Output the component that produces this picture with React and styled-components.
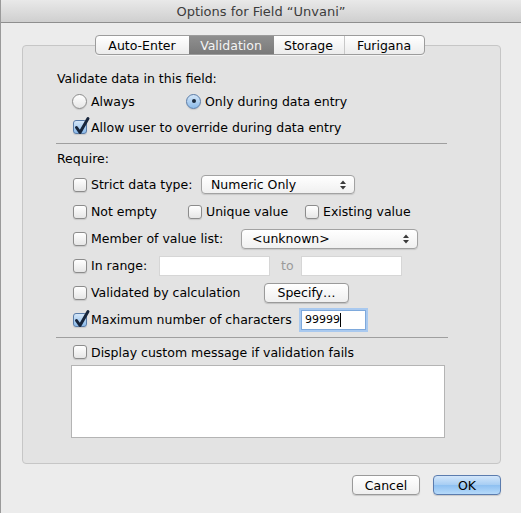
import React from "react";
import styled, { createGlobalStyle } from "styled-components";

const GlobalStyle = createGlobalStyle`
  html, body {
    margin: 0;
    padding: 0;
    background: #ececec;
  }
  body {
    font-family: "DejaVu Sans", "Liberation Sans", sans-serif;
    font-size: 12.5px;
    color: #000;
  }
`;

const Window = styled.div`
  width: 521px;
  height: 513px;
  box-sizing: border-box;
  background: #ececec;
  border-left: 1px solid #9a9a9a;
  display: flex;
  flex-direction: column;
  overflow: hidden;
`;

const TitleBar = styled.div`
  height: 21px;
  flex-shrink: 0;
  display: flex;
  align-items: center;
  justify-content: center;
  background: linear-gradient(#e9e9e9, #cfcfcf);
  border-bottom: 1px solid #8e8e8e;
  font-size: 13px;
  color: #3c3c3c;
  padding-top: 1px;
`;

const Body = styled.div`
  padding: 22px 20px 0 21px;
  display: flex;
  flex-direction: column;
`;

const GroupBox = styled.div`
  height: 419px;
  box-sizing: border-box;
  background: #e3e3e3;
  border: 1px solid #c6c6c6;
  border-radius: 4px;
  display: flex;
  flex-direction: column;
`;

const TabBar = styled.div`
  margin-top: -11px;
  align-self: center;
  display: flex;
  height: 20px;
  box-sizing: border-box;
  border: 1px solid #9c9c9c;
  border-radius: 4px;
  background: linear-gradient(#ffffff, #ececec);
  overflow: hidden;
  box-shadow: 0 1px 0 rgba(255, 255, 255, 0.6);
  margin-left: -4px;
`;

const Tab = styled.div`
  width: ${(p) => p.$w}px;
  display: flex;
  align-items: center;
  justify-content: center;
  font-size: 12.5px;
  color: ${(p) => (p.$active ? "#f4f4f4" : "#000")};
  background: ${(p) =>
    p.$active ? "linear-gradient(#8f8f8f, #7a7a7a)" : "transparent"};
  border-left: ${(p) => (p.$divider ? "1px solid #c8c8c8" : "none")};
`;

const Section = styled.div`
  display: flex;
  flex-direction: column;
  padding-left: ${(p) => p.$pl || 0}px;
`;

const Row = styled.div`
  height: ${(p) => p.$h || 20}px;
  margin-top: ${(p) => p.$mt || 0}px;
  padding-left: ${(p) => p.$pl || 0}px;
  display: flex;
  align-items: center;
`;

const Label = styled.span`
  white-space: nowrap;
  color: ${(p) => (p.$dim ? "#9a9a9a" : "#000")};
`;

const RangeTo = styled(Label)`
  margin: 0 7px 0 11px;
`;

const Separator = styled.div`
  height: 1px;
  width: ${(p) => p.$w}px;
  margin-top: ${(p) => p.$mt || 0}px;
  margin-left: 33px;
  background: #9f9f9f;
`;

const Choice = styled.label`
  width: ${(p) => (p.$w ? `${p.$w}px` : "auto")};
  flex-shrink: 0;
  display: flex;
  align-items: center;
  gap: 4px;
  white-space: nowrap;
`;

const BoxIcon = styled.span`
  width: ${(p) => (p.$round ? 15 : 14)}px;
  height: ${(p) => (p.$round ? 15 : 14)}px;
  flex-shrink: 0;
  position: relative;
  box-sizing: border-box;
  border: 1px solid ${(p) => (p.$on ? "#5a7ca8" : "#8c8c8c")};
  border-radius: ${(p) => (p.$round ? "50%" : "3px")};
  background: ${(p) =>
    p.$on
      ? "linear-gradient(#d4e6f8, #8cbbea)"
      : "linear-gradient(#ffffff, #e6e6e6)"};
  box-shadow: 0 1px 1px rgba(0, 0, 0, 0.12);
`;

const Dot = styled.span`
  position: absolute;
  left: 4.5px;
  top: 4.5px;
  width: 4px;
  height: 4px;
  border-radius: 50%;
  background: #1b2a3d;
`;

const CheckMark = styled.svg`
  position: absolute;
  left: 0px;
  top: -4px;
  overflow: visible;
`;

const Popup = styled.div`
  width: ${(p) => p.$w}px;
  height: ${(p) => p.$h || 20}px;
  box-sizing: border-box;
  flex-shrink: 0;
  border: 1px solid #a2a2a2;
  border-radius: 4px;
  background: linear-gradient(#ffffff, #f0f0f0);
  box-shadow: 0 1px 1px rgba(0, 0, 0, 0.12);
  display: flex;
  align-items: center;
  justify-content: space-between;
  padding: 0 8px 0 ${(p) => p.$pl || 9}px;
`;

const Field = styled.div`
  width: ${(p) => p.$w}px;
  height: 20px;
  box-sizing: border-box;
  flex-shrink: 0;
  background: #fff;
  border: 1px solid ${(p) => (p.$focus ? "#7ea9dc" : "#d6d6d6")};
  box-shadow: ${(p) => (p.$focus ? "0 0 0 2px #a9c9ef" : "none")};
  display: flex;
  align-items: center;
  padding-left: 3px;
  font-size: 11px;
`;

const Caret = styled.span`
  width: 1px;
  height: 14px;
  background: #000;
`;

const TextArea = styled.div`
  width: 374px;
  height: 73px;
  margin-top: 3px;
  margin-left: 48px;
  box-sizing: border-box;
  background: #fff;
  border: 1px solid #b4b4b4;
`;

const Button = styled.div`
  width: ${(p) => p.$w || 68}px;
  height: 20px;
  box-sizing: border-box;
  flex-shrink: 0;
  display: flex;
  align-items: center;
  justify-content: center;
  border-radius: 4px;
  border: 1px solid ${(p) => (p.$primary ? "#5b7cae" : "#9a9a9a")};
  background: ${(p) =>
    p.$primary
      ? "linear-gradient(#d3e6fa 0%, #a6cdf3 50%, #8ec0f1 51%, #b6dafa 100%)"
      : "linear-gradient(#ffffff, #efefef)"};
  box-shadow: 0 1px 1px rgba(0, 0, 0, 0.15);
  white-space: nowrap;
`;

const Footer = styled.div`
  display: flex;
  justify-content: flex-end;
  gap: 13px;
  margin-top: 11px;
`;

function Arrows() {
  return (
    <svg width="6" height="10" viewBox="0 0 6 10">
      <path d="M0 4 L3 0.5 L6 4 Z" fill="#3a3a3a" />
      <path d="M0 6 L3 9.5 L6 6 Z" fill="#3a3a3a" />
    </svg>
  );
}

function Check({ on, children, w }) {
  return (
    <Choice $w={w}>
      <BoxIcon $on={on}>
        {on && (
          <CheckMark width="16" height="18" viewBox="0 0 16 18">
            <path
              d="M2.5 10.5 L6 15.5 L14 1.5"
              fill="none"
              stroke="#17253b"
              strokeWidth="3"
              strokeLinecap="round"
              strokeLinejoin="round"
            />
          </CheckMark>
        )}
      </BoxIcon>
      <Label>{children}</Label>
    </Choice>
  );
}

function Radio({ on, children, w }) {
  return (
    <Choice $w={w}>
      <BoxIcon $round $on={on}>
        {on && <Dot />}
      </BoxIcon>
      <Label>{children}</Label>
    </Choice>
  );
}

export default function App() {
  return (
    <>
      <GlobalStyle />
      <Window>
        <TitleBar>Options for Field “Unvani”</TitleBar>
        <Body>
          <GroupBox>
            <TabBar>
              <Tab $w={93}>Auto-Enter</Tab>
              <Tab $w={85} $active>Validation</Tab>
              <Tab $w={70}>Storage</Tab>
              <Tab $w={79} $divider>Furigana</Tab>
            </TabBar>

            <Section $pl={34}>
              <Row $mt={13}>
                <Label>Validate data in this field:</Label>
              </Row>
              <Row $mt={3} $pl={15}>
                <Radio w={114}>Always</Radio>
                <Radio on>Only during data entry</Radio>
              </Row>
              <Row $mt={6} $pl={16}>
                <Check on>Allow user to override during data entry</Check>
              </Row>
            </Section>

            <Separator $w={391} $mt={6} />

            <Section $pl={34}>
              <Row $mt={4}>
                <Label>Require:</Label>
              </Row>
            </Section>

            <Section $pl={50}>
              <Row $h={27} $mt={3}>
                <Check w={128}>Strict data type:</Check>
                <Popup $w={154} $h={19}>
                  <Label>Numeric Only</Label>
                  <Arrows />
                </Popup>
              </Row>
              <Row $h={27}>
                <Check w={115}>Not empty</Check>
                <Check w={117}>Unique value</Check>
                <Check>Existing value</Check>
              </Row>
              <Row $h={27}>
                <Check w={168}>Member of value list:</Check>
                <Popup $w={177} $pl={10}>
                  <Label>&lt;unknown&gt;</Label>
                  <Arrows />
                </Popup>
              </Row>
              <Row $h={27}>
                <Check w={86}>In range:</Check>
                <Field $w={111} />
                <RangeTo $dim>to</RangeTo>
                <Field $w={101} />
              </Row>
              <Row $h={27}>
                <Check w={191}>Validated by calculation</Check>
                <Button $w={85}>Specify…</Button>
              </Row>
              <Row $h={27}>
                <Check on w={228}>
                  Maximum number of characters
                </Check>
                <Field $w={65} $focus>
                  99999
                  <Caret />
                </Field>
              </Row>
            </Section>

            <Separator $w={392} $mt={4} />

            <Section $pl={50}>
              <Row $mt={4}>
                <Check>Display custom message if validation fails</Check>
              </Row>
            </Section>

            <TextArea />
          </GroupBox>

          <Footer>
            <Button $w={68}>Cancel</Button>
            <Button $w={68} $primary>
              OK
            </Button>
          </Footer>
        </Body>
      </Window>
    </>
  );
}
